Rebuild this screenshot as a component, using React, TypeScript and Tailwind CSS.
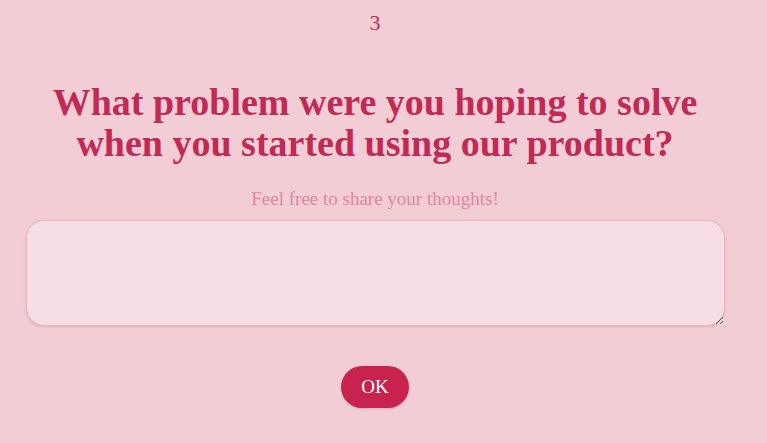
export default function App() {
  return (
    <div className="min-h-screen w-full bg-[#f2cdd5] font-['Liberation_Serif',serif]">
      <div className="w-[750px] flex flex-col items-center">
        <div className="pt-[9px] text-[22px] leading-[28px] text-[#c02a55]">3</div>
        <h1 className="mt-[45px] w-[700px] text-center text-[38px] leading-[41px] font-semibold text-[#c02a55]">
          What problem were you hoping to solve when you started using our product?
        </h1>
        <p className="mt-[22px] text-[19px] leading-[25px] text-[#de86a0]">Feel free to share your thoughts!</p>
        <textarea className="mt-[9px] w-[699px] h-[106px] rounded-[18px] border border-[#ebb3c3] bg-[#f6dee4] outline-none shadow-sm" />
        <button className="mt-[40px] h-[42px] w-[68px] rounded-full bg-[#c8224f] text-white text-[19px] shadow-sm">
          OK
        </button>
      </div>
    </div>
  );
}
